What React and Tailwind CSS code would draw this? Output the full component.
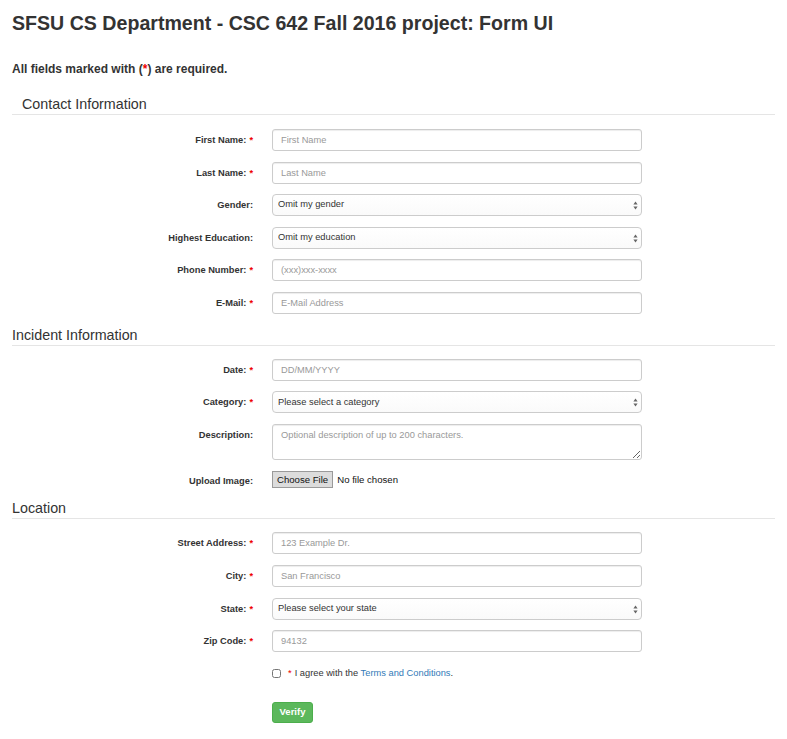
import { useState } from 'react';

const labelCls = "text-right text-[9.3px] font-bold leading-[22px] text-[#333] whitespace-nowrap";
const inputCls = "block w-[370px] h-[22px] rounded-[3px] border border-[#ccc] bg-white px-[8px] text-[9.3px] text-[#555] shadow-[inset_0_1px_1px_rgba(0,0,0,0.075)] outline-none placeholder:text-[#999]";

function Req() {
    return <span className="ml-[3px] text-[#e00]">*</span>;
}

function FieldLabel({ text, required }) {
    return (
        <div className={labelCls}>
            {text}
            {required && <Req />}
        </div>
    );
}

function TextField({ label, required, placeholder, name, value, onChange }) {
    return (
        <>
            <FieldLabel text={label} required={required} />
            <input
                type="text"
                name={name}
                value={value}
                onChange={onChange}
                placeholder={placeholder}
                className={inputCls}
            />
        </>
    );
}

function SelectField({ label, required, options, name, value, onChange }) {
    return (
        <>
            <FieldLabel text={label} required={required} />
            <div className="relative w-[370px] h-[22px]">
                <select
                    name={name}
                    value={value}
                    onChange={onChange}
                    className="block w-full h-full appearance-none rounded-[4px] border border-[#ccc] bg-gradient-to-b from-white to-[#fafafa] pl-[5px] pr-[16px] text-[9.3px] text-[#333] outline-none"
                >
                    {options.map((o) => (
                        <option key={o}>{o}</option>
                    ))}
                </select>
                <svg className="pointer-events-none absolute right-[4px] top-[7px]" width="5" height="9" viewBox="0 0 5 9">
                    <path d="M2.5 0.5 L4.6 3.6 L0.4 3.6 Z" fill="#666" />
                    <path d="M2.5 8.5 L4.6 5.4 L0.4 5.4 Z" fill="#666" />
                </svg>
            </div>
        </>
    );
}

function SectionHeading({ children, indent }) {
    return (
        <div className={"border-b border-[#e5e5e5] pb-[1px] text-[14.3px] leading-[18px] text-[#333] " + (indent ? "pl-[10px]" : "")}>
            {children}
        </div>
    );
}

export default function App() {
    const [form, setForm] = useState({
        firstName: '',
        lastName: '',
        gender: 'Omit my gender',
        education: 'Omit my education',
        phone: '',
        email: '',
        date: '',
        category: 'Please select a category',
        description: '',
        street: '',
        city: '',
        state: 'Please select your state',
        zip: '',
        agree: false,
    });

    const handleChange = (e) => {
        const { name, value, type, checked } = e.target;
        setForm((prev) => ({ ...prev, [name]: type === 'checkbox' ? checked : value }));
    };

    const grid = "grid grid-cols-[241px_370px] gap-x-[19px] items-start";

    return (
        <div className="min-h-screen bg-white px-3 pb-4 font-['Liberation_Sans',Arial,sans-serif] text-[#333]">
            <h3 className="pt-[11px] text-[19.6px] font-bold leading-[24px] text-[#333]">
                SFSU CS Department - CSC 642 Fall 2016 project: Form UI
            </h3>

            <p className="mt-[27px] text-[12px] font-bold leading-[14px]">
                All fields marked with (<span className="text-[#e00]">*</span>) are required.
            </p>

            <form onSubmit={(e) => e.preventDefault()}>
                <div className="mt-[19px]">
                    <SectionHeading indent>Contact Information</SectionHeading>
                </div>
                <div className={grid + " mt-[14px] gap-y-[10.6px]"}>
                    <TextField label="First Name:" required placeholder="First Name" name="firstName" value={form.firstName} onChange={handleChange} />
                    <TextField label="Last Name:" required placeholder="Last Name" name="lastName" value={form.lastName} onChange={handleChange} />
                    <SelectField label="Gender:" options={['Omit my gender', 'Female', 'Male', 'Other']} name="gender" value={form.gender} onChange={handleChange} />
                    <SelectField label="Highest Education:" options={['Omit my education', 'High School', 'Bachelor', 'Master', 'PhD']} name="education" value={form.education} onChange={handleChange} />
                    <TextField label="Phone Number:" required placeholder="(xxx)xxx-xxxx" name="phone" value={form.phone} onChange={handleChange} />
                    <TextField label="E-Mail:" required placeholder="E-Mail Address" name="email" value={form.email} onChange={handleChange} />
                </div>

                <div className="mt-[12px]">
                    <SectionHeading>Incident Information</SectionHeading>
                </div>
                <div className={grid + " mt-[13px] gap-y-[10.5px]"}>
                    <TextField label="Date:" required placeholder="DD/MM/YYYY" name="date" value={form.date} onChange={handleChange} />
                    <SelectField label="Category:" required options={['Please select a category', 'Theft', 'Vandalism', 'Other']} name="category" value={form.category} onChange={handleChange} />
                    <FieldLabel text="Description:" />
                    <textarea
                        name="description"
                        value={form.description}
                        onChange={handleChange}
                        maxLength={200}
                        placeholder="Optional description of up to 200 characters."
                        className="block w-[370px] h-[36px] resize-y rounded-[3px] border border-[#ccc] bg-white px-[8px] py-[4px] text-[9.3px] leading-[12px] text-[#555] shadow-[inset_0_1px_1px_rgba(0,0,0,0.075)] outline-none placeholder:text-[#999]"
                    />
                    <FieldLabel text="Upload Image:" />
                    <div className="mt-[1px] flex items-center h-[17px]">
                        <button
                            type="button"
                            className="h-[17px] border border-[#9a9a9a] bg-[#dcdcdc] px-[4px] text-[9.6px] leading-[15px] text-[#111]"
                        >
                            Choose File
                        </button>
                        <span className="ml-[4px] text-[9.6px] leading-[15px] text-[#111]">No file chosen</span>
                    </div>
                </div>

                <div className="mt-[7px]">
                    <SectionHeading>Location</SectionHeading>
                </div>
                <div className={grid + " mt-[13px] gap-y-[10.6px]"}>
                    <TextField label="Street Address:" required placeholder="123 Example Dr." name="street" value={form.street} onChange={handleChange} />
                    <TextField label="City:" required placeholder="San Francisco" name="city" value={form.city} onChange={handleChange} />
                    <SelectField label="State:" required options={['Please select your state', 'California', 'Nevada', 'Oregon']} name="state" value={form.state} onChange={handleChange} />
                    <TextField label="Zip Code:" required placeholder="94132" name="zip" value={form.zip} onChange={handleChange} />
                    <div />
                    <label className="mt-[2px] flex items-center h-[18px] text-[9.3px] text-[#333]">
                        <input
                            type="checkbox"
                            name="agree"
                            checked={form.agree}
                            onChange={handleChange}
                            className="m-0 h-[9px] w-[9px] accent-[#888]"
                        />
                        <span className="ml-[7px] text-[#e00]">*</span>
                        <span className="ml-[3px]">
                            I agree with the <a href="#" className="text-[#337ab7]">Terms and Conditions</a>.
                        </span>
                    </label>
                    <div />
                    <div className="mt-[5px]">
                        <button
                            type="submit"
                            className="h-[21px] w-[41px] rounded-[3px] border border-[#4cae4c] bg-[#5cb85c] text-[9.5px] font-bold text-white"
                        >
                            Verify
                        </button>
                    </div>
                </div>
            </form>
        </div>
    );
}
